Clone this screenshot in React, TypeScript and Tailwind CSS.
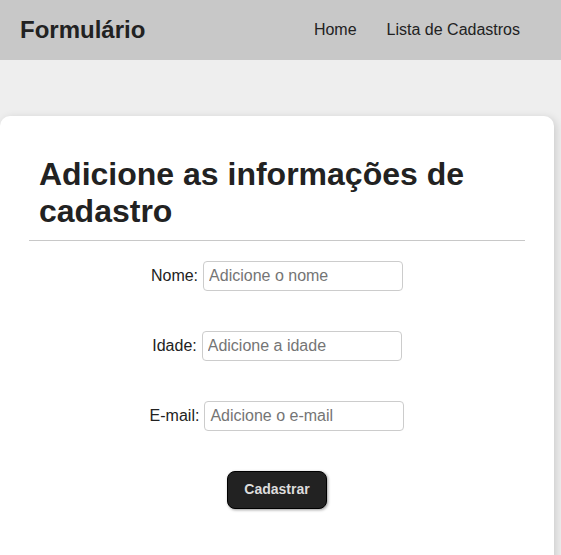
export default function App() {
  return (
    <div className="min-h-[555px] bg-[#eeeeee] font-['Liberation_Sans',Arial,sans-serif] text-[#222]">
      <header className="flex h-[60px] items-center justify-between bg-[#c8c8c8] pb-[1px] pl-[20px] pr-[41px]">
        <h2 className="text-[24px] font-bold">Formulário</h2>
        <nav className="flex gap-[30px] text-[16px]">
          <a href="#">Home</a>
          <a href="#">Lista de Cadastros</a>
        </nav>
      </header>

      <main className="pt-[56px]">
        <div className="w-[554px] rounded-[10px] bg-white px-[29px] pb-[80px] pt-[40px] shadow-[2px_2px_8px_rgba(0,0,0,0.15)]">
          <h1 className="pl-[10px] text-[32px] font-bold leading-[1.15]">
            Adicione as informações de cadastro
          </h1>
          <hr className="mt-[10px] border-t border-[#c8c8c8]" />

          <form className="flex flex-col items-center gap-[40px] pt-[20px]" onSubmit={(e) => e.preventDefault()}>
            <div className="flex items-center gap-[5px] text-[16px]">
              <label>Nome:</label>
              <input
                className="h-[30px] w-[200px] rounded-[4px] border border-[#ccc] px-[5px] placeholder:text-[#757575]"
                placeholder="Adicione o nome"
              />
            </div>
            <div className="flex items-center gap-[5px] text-[16px]">
              <label>Idade:</label>
              <input
                className="h-[30px] w-[200px] rounded-[4px] border border-[#ccc] px-[5px] placeholder:text-[#757575]"
                placeholder="Adicione a idade"
              />
            </div>
            <div className="flex items-center gap-[5px] text-[16px]">
              <label>E-mail:</label>
              <input
                className="h-[30px] w-[200px] rounded-[4px] border border-[#ccc] px-[5px] placeholder:text-[#757575]"
                placeholder="Adicione o e-mail"
              />
            </div>
            <button
              type="submit"
              className="h-[38px] w-[100px] rounded-[8px] border border-black bg-[#222] text-[14px] font-bold text-[#ddd] shadow-[1px_1px_3px_rgba(0,0,0,0.4)]"
            >
              Cadastrar
            </button>
          </form>
        </div>
      </main>
    </div>
  );
}
